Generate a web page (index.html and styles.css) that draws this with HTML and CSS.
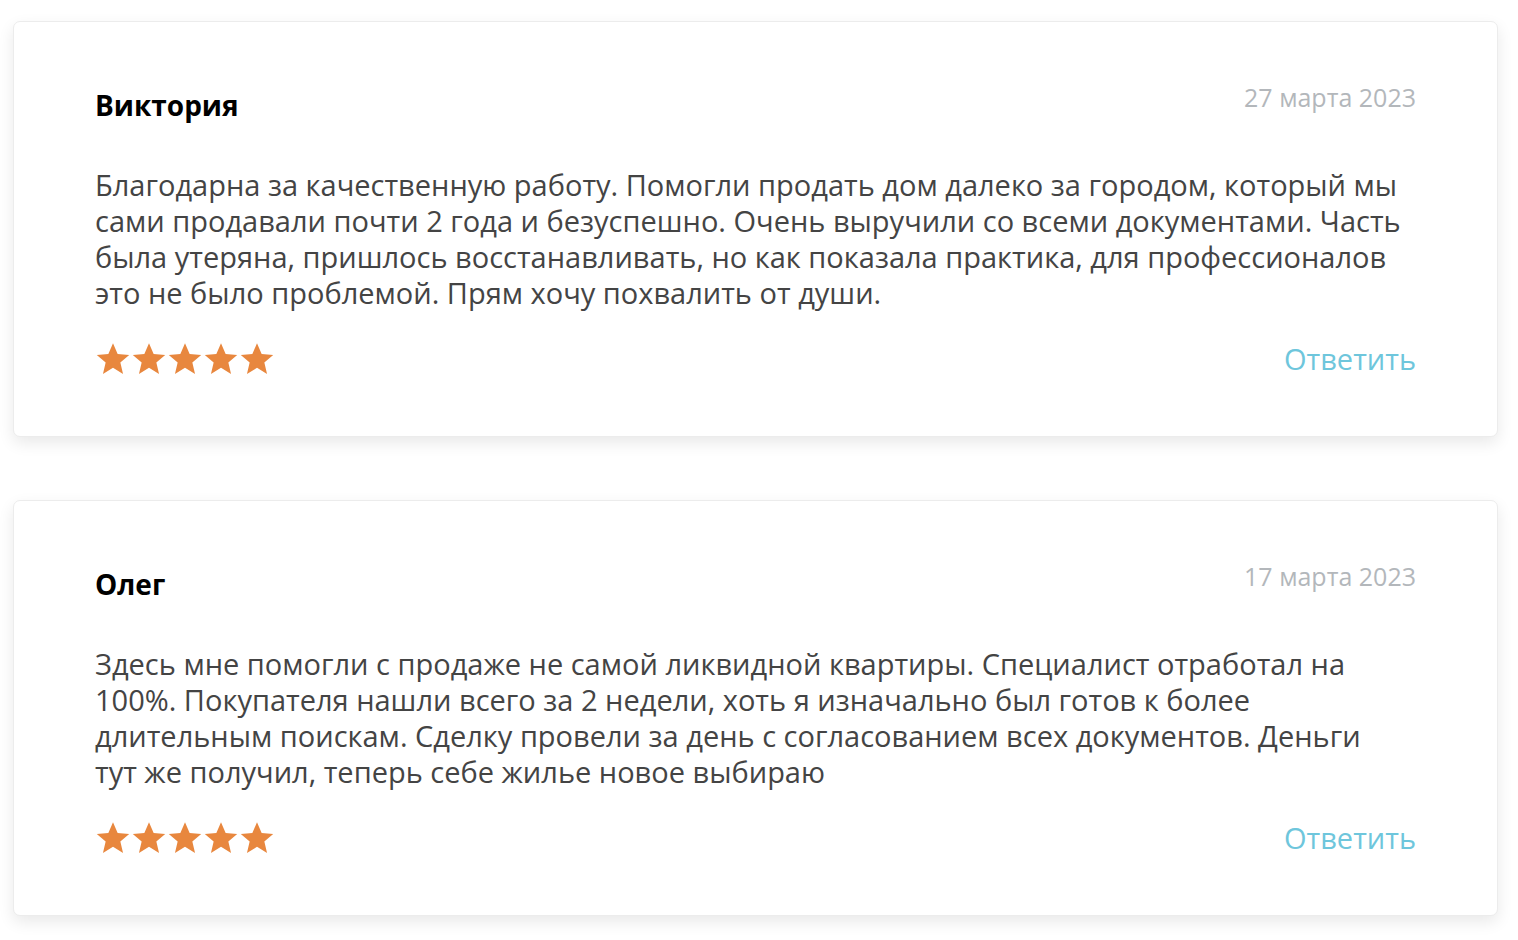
FILE: index.html
```html
<!DOCTYPE html>
<html lang="ru">
<head>
<meta charset="utf-8">
<link rel="stylesheet" href="styles.css">
</head>
<body>
<div class="reviews">
  <div class="card">
    <div class="head">
      <div class="name">Виктория</div>
      <div class="date">27 марта 2023</div>
    </div>
    <p class="text">Благодарна за качественную работу. Помогли продать дом далеко за городом, который мы сами продавали почти 2 года и безуспешно. Очень выручили со всеми документами. Часть была утеряна, пришлось восстанавливать, но как показала практика, для профессионалов это не было проблемой. Прям хочу похвалить от души.</p>
    <div class="foot">
      <div class="stars">
        <svg viewBox="0 0 24 24"><path d="M12 1.5l3.1 7.2 7.7.6-5.9 5.1 1.8 7.6L12 17.9 5.3 22l1.8-7.6-5.9-5.1 7.7-.6z"/></svg>
        <svg viewBox="0 0 24 24"><path d="M12 1.5l3.1 7.2 7.7.6-5.9 5.1 1.8 7.6L12 17.9 5.3 22l1.8-7.6-5.9-5.1 7.7-.6z"/></svg>
        <svg viewBox="0 0 24 24"><path d="M12 1.5l3.1 7.2 7.7.6-5.9 5.1 1.8 7.6L12 17.9 5.3 22l1.8-7.6-5.9-5.1 7.7-.6z"/></svg>
        <svg viewBox="0 0 24 24"><path d="M12 1.5l3.1 7.2 7.7.6-5.9 5.1 1.8 7.6L12 17.9 5.3 22l1.8-7.6-5.9-5.1 7.7-.6z"/></svg>
        <svg viewBox="0 0 24 24"><path d="M12 1.5l3.1 7.2 7.7.6-5.9 5.1 1.8 7.6L12 17.9 5.3 22l1.8-7.6-5.9-5.1 7.7-.6z"/></svg>
      </div>
      <a class="reply" href="#">Ответить</a>
    </div>
  </div>
  <div class="card">
    <div class="head">
      <div class="name">Олег</div>
      <div class="date">17 марта 2023</div>
    </div>
    <p class="text">Здесь мне помогли с продаже не самой ликвидной квартиры. Специалист отработал на 100%. Покупателя нашли всего за 2 недели, хоть я изначально был готов к более длительным поискам. Сделку провели за день с согласованием всех документов. Деньги тут же получил, теперь себе жилье новое выбираю</p>
    <div class="foot">
      <div class="stars">
        <svg viewBox="0 0 24 24"><path d="M12 1.5l3.1 7.2 7.7.6-5.9 5.1 1.8 7.6L12 17.9 5.3 22l1.8-7.6-5.9-5.1 7.7-.6z"/></svg>
        <svg viewBox="0 0 24 24"><path d="M12 1.5l3.1 7.2 7.7.6-5.9 5.1 1.8 7.6L12 17.9 5.3 22l1.8-7.6-5.9-5.1 7.7-.6z"/></svg>
        <svg viewBox="0 0 24 24"><path d="M12 1.5l3.1 7.2 7.7.6-5.9 5.1 1.8 7.6L12 17.9 5.3 22l1.8-7.6-5.9-5.1 7.7-.6z"/></svg>
        <svg viewBox="0 0 24 24"><path d="M12 1.5l3.1 7.2 7.7.6-5.9 5.1 1.8 7.6L12 17.9 5.3 22l1.8-7.6-5.9-5.1 7.7-.6z"/></svg>
        <svg viewBox="0 0 24 24"><path d="M12 1.5l3.1 7.2 7.7.6-5.9 5.1 1.8 7.6L12 17.9 5.3 22l1.8-7.6-5.9-5.1 7.7-.6z"/></svg>
      </div>
      <a class="reply" href="#">Ответить</a>
    </div>
  </div>
</div>
</body>
</html>
```
FILE: styles.css
```css
html, body {
  margin: 0;
  padding: 0;
  background: #fff;
}
body {
  font-family: "Open Sans", "Noto Sans", sans-serif;
  color: #444;
}
.reviews {
  padding: 21px 20px 24px 13px;
  display: flex;
  flex-direction: column;
  gap: 63px;
}
.card {
  background: #fff;
  border: 1px solid #ececec;
  border-radius: 7px;
  box-shadow: 0 6px 16px rgba(0, 0, 0, 0.09);
  padding: 61px 81px 50px 81px;
  height: 416px;
  box-sizing: border-box;
}
.head {
  display: flex;
  justify-content: space-between;
  align-items: flex-start;
}
.name {
  font-size: 28px;
  font-weight: 700;
  color: #000;
  line-height: 36px;
  padding-top: 4px;
}
.date {
  font-size: 25px;
  color: #b3b7bb;
  line-height: 28px;
}
.text {
  margin: 44px 0 0 0;
  padding-right: 8px;
  font-size: 29px;
  line-height: 36px;
  color: #444;
}
.foot {
  margin-top: 28px;
  display: flex;
  justify-content: space-between;
  align-items: center;
}
.stars {
  display: flex;
  gap: 0;
}
.stars svg {
  width: 36px;
  height: 36px;
  fill: #e8873e;
}
.reply {
  font-size: 29px;
  color: #6ec6dc;
  text-decoration: none;
}
```
